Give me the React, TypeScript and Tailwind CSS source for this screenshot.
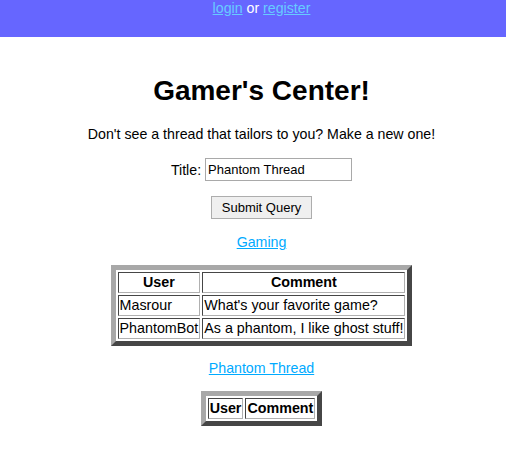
import React from "react";

const cell =
  "border border-solid border-t-[#464646] border-l-[#464646] border-b-[#b0b0b0] border-r-[#b0b0b0] p-[1px] leading-[17px]";

function Table({ rows }: { rows: [string, string][] }) {
  return (
    <table className="mx-auto border-separate border-spacing-[2px] border-[5px] border-solid border-t-[#a8a8a8] border-l-[#a8a8a8] border-b-[#464646] border-r-[#464646] text-[14.3px] text-black">
      <thead>
        <tr>
          <th className={`${cell} font-bold text-center`}>User</th>
          <th className={`${cell} font-bold text-center`}>Comment</th>
        </tr>
      </thead>
      <tbody>
        {rows.map(([u, c], i) => (
          <tr key={i}>
            <td className={`${cell} text-left`}>{u}</td>
            <td className={`${cell} text-left`}>{c}</td>
          </tr>
        ))}
      </tbody>
    </table>
  );
}

export default function App() {
  return (
    <div className="min-h-[464px] bg-white text-black text-[14.2px] font-['Liberation_Sans',Arial,sans-serif] text-center">
      <div className="h-[37px] bg-[#6666ff] pl-[17px] leading-[16px] text-white">
        <a href="#" className="text-[#66ccff] underline">login</a> or{" "}
        <a href="#" className="text-[#66ccff] underline">register</a>
      </div>
      <div className="pl-[17px]">
        <h1 className="mt-[38px] text-[28px] font-bold leading-[32px]">Gamer's Center!</h1>
        <p className="mt-[19px] leading-[16px]">
          Don't see a thread that tailors to you? Make a new one!
        </p>
        <div className="mt-[16px] flex items-center justify-center gap-[4px]">
          <span className="leading-[16px]">Title:</span>
          <input
            type="text"
            defaultValue="Phantom Thread"
            className="w-[147px] h-[23px] border border-solid border-[#a9a9a9] px-[2px] text-[13px] text-black outline-none"
          />
        </div>
        <div className="mt-[15px] flex justify-center">
          <button className="w-[101px] h-[23px] border border-solid border-[#adadad] bg-[#efefef] text-[13px] text-black">
            Submit Query
          </button>
        </div>
        <div className="mt-[15px] leading-[16px]">
          <a href="#" className="text-[#00aaff] underline">Gaming</a>
        </div>
        <div className="mt-[15px]">
          <Table
            rows={[
              ["Masrour", "What's your favorite game?"],
              ["PhantomBot", "As a phantom, I like ghost stuff!"],
            ]}
          />
        </div>
        <div className="mt-[14px] leading-[16px]">
          <a href="#" className="text-[#00aaff] underline">Phantom Thread</a>
        </div>
        <div className="mt-[15px]">
          <Table rows={[]} />
        </div>
      </div>
    </div>
  );
}
